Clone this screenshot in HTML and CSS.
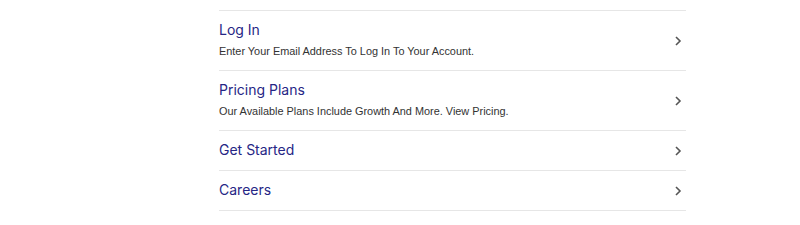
FILE: index.html
```html
<!DOCTYPE html>
<html lang="en">
<head>
    <meta charset="UTF-8">
    <meta name="viewport" content="width=device-width, initial-scale=1.0">
    <title>Links</title>
    <link rel="stylesheet" href="styles.css">
</head>
<body>
    <div class="page">
        <ul class="link-list">
            <li>
                <a href="#" class="link-row">
                    <div class="link-text">
                        <div class="link-title">Log In</div>
                        <div class="link-desc">Enter Your Email Address To Log In To Your Account.</div>
                    </div>
                    <svg class="chevron" width="8" height="12" viewBox="0 0 8 12"><path d="M2 2l4 4-4 4" fill="none" stroke="#555" stroke-width="1.6"/></svg>
                </a>
            </li>
            <li>
                <a href="#" class="link-row">
                    <div class="link-text">
                        <div class="link-title">Pricing Plans</div>
                        <div class="link-desc">Our Available Plans Include Growth And More. View Pricing.</div>
                    </div>
                    <svg class="chevron" width="8" height="12" viewBox="0 0 8 12"><path d="M2 2l4 4-4 4" fill="none" stroke="#555" stroke-width="1.6"/></svg>
                </a>
            </li>
            <li>
                <a href="#" class="link-row">
                    <div class="link-text">
                        <div class="link-title">Get Started</div>
                    </div>
                    <svg class="chevron" width="8" height="12" viewBox="0 0 8 12"><path d="M2 2l4 4-4 4" fill="none" stroke="#555" stroke-width="1.6"/></svg>
                </a>
            </li>
            <li>
                <a href="#" class="link-row">
                    <div class="link-text">
                        <div class="link-title">Careers</div>
                    </div>
                    <svg class="chevron" width="8" height="12" viewBox="0 0 8 12"><path d="M2 2l4 4-4 4" fill="none" stroke="#555" stroke-width="1.6"/></svg>
                </a>
            </li>
        </ul>
    </div>
</body>
</html>
```

FILE: styles.css
```css
body { margin: 0; background: #fff; font-family: "Liberation Sans", Arial, sans-serif; }
.page { padding: 10px 114px 0 219px; }
.link-list { list-style: none; margin: 0; padding: 0; border-top: 1px solid #e6e6e6; }
.link-list li { border-bottom: 1px solid #e6e6e6; }
.link-row { display: flex; align-items: center; justify-content: space-between; padding: 9px 0 10px; text-decoration: none; }
.link-title { font-family: Inter, "Noto Sans", sans-serif; font-size: 14px; line-height: 20px; color: #262685; }
.link-desc { margin-top: 2px; font-size: 10.9px; line-height: 18px; color: #333; }
.chevron { margin-right: 4px; margin-top: 1px; }
```
